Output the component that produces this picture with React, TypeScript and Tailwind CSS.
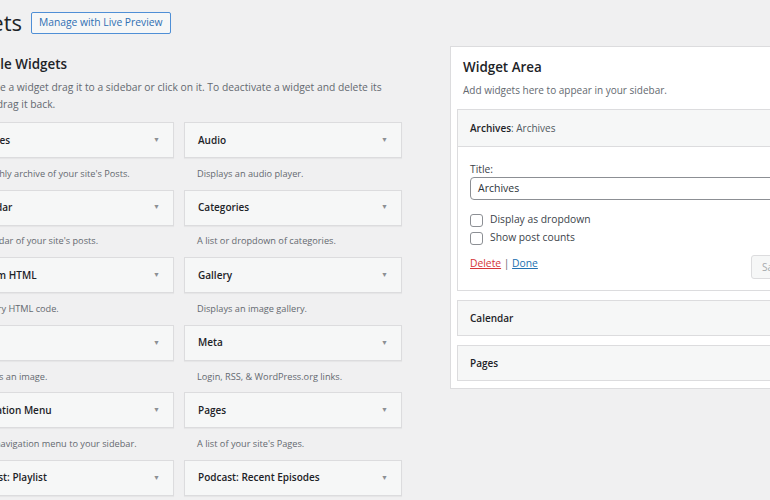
import React from "react";

type Widget = {
  name: string;
  description: string;
};

const leftWidgets: Widget[] = [
  { name: "Archives", description: "A monthly archive of your site's Posts." },
  { name: "Calendar", description: "A calendar of your site's posts." },
  { name: "Custom HTML", description: "Arbitrary HTML code." },
  { name: "Image", description: "Displays an image." },
  { name: "Navigation Menu", description: "Add a navigation menu to your sidebar." },
  { name: "Podcast: Playlist", description: "Displays a podcast playlist." }
];

const rightWidgets: Widget[] = [
  { name: "Audio", description: "Displays an audio player." },
  { name: "Categories", description: "A list or dropdown of categories." },
  { name: "Gallery", description: "Displays an image gallery." },
  { name: "Meta", description: "Login, RSS, & WordPress.org links." },
  { name: "Pages", description: "A list of your site's Pages." },
  { name: "Podcast: Recent Episodes", description: "Displays recent podcast episodes." }
];

function WidgetItem({ widget }: { widget: Widget }) {
  return (
    <div>
      <div className="flex h-[36px] items-center justify-between border border-[#dcdcde] bg-[#f6f7f7] pl-[13px] pr-[13px] shadow-[0_1px_1px_rgba(0,0,0,0.04)]">
        <span className="text-[10px] font-semibold text-[#1d2327]">{widget.name}</span>
        <span className="text-[7px] text-[#8c8f94]">▼</span>
      </div>
      <div className="flex h-[31.6px] items-center pl-[13px] text-[9.2px] text-[#646970]">
        {widget.description}
      </div>
    </div>
  );
}

function CollapsedWidget({ name }: { name: string }) {
  return (
    <div className="flex h-[36px] items-center border border-[#dcdcde] bg-[#f6f7f7] px-[12px]">
      <span className="text-[10px] font-semibold text-[#1d2327]">{name}</span>
    </div>
  );
}

function Checkbox({ label }: { label: string }) {
  return (
    <label className="flex h-[18px] items-center gap-[7px]">
      <span className="h-[13px] w-[13px] rounded-[3px] border border-[#8c8f94] bg-white" />
      <span className="text-[10.3px] text-[#3c434a]">{label}</span>
    </label>
  );
}

export default function App() {
  return (
    <div className="h-[500px] w-[770px] overflow-hidden bg-[#f0f0f1] font-['Open_Sans',sans-serif]">
      <div className="ml-[-60px] flex h-[46px] items-center gap-[9px] pb-[1px]">
        <h1 className="text-[22px] font-normal text-[#1d2327]">Widgets</h1>
        <button className="h-[22px] rounded-[2px] border border-[#4f8fd6] bg-[#f6f7f7] px-[7px] text-[10.3px] font-medium text-[#2f6fb3]">
          Manage with Live Preview
        </button>
      </div>

      <div className="flex">
        <div className="ml-[-45px] w-[447px] shrink-0">
          <h2 className="mt-[8px] ml-[-2px] text-[13.4px] leading-[20px] font-semibold text-[#1d2327]">
            Available Widgets
          </h2>
          <p className="mt-[5px] ml-[-1px] w-[430px] text-[10.3px] leading-[17px] text-[#646970]">
            To activate a widget drag it to a sidebar or click on it. To deactivate a widget and
            delete its settings, drag it back.
          </p>
          <div className="mt-[9px] grid grid-cols-[219px_218px] gap-x-[10px]">
            {leftWidgets.map((widget, index) => (
              <React.Fragment key={widget.name}>
                <WidgetItem widget={widget} />
                <WidgetItem widget={rightWidgets[index]} />
              </React.Fragment>
            ))}
          </div>
        </div>

        <div className="ml-[48px] w-[371px] shrink-0 self-start border border-[#dcdcde] bg-white px-[6px] pb-[7px]">
          <div className="px-[6px] pt-[10px] pb-[12px]">
            <h2 className="text-[13.4px] leading-[20px] font-semibold text-[#1d2327]">Widget Area</h2>
            <p className="mt-[6px] text-[10px] leading-[14px] text-[#646970]">
              Add widgets here to appear in your sidebar.
            </p>
          </div>

          <div className="border border-[#dcdcde]">
            <div className="flex h-[37px] items-center border-b border-[#dcdcde] bg-[#f6f7f7] px-[12px] text-[10px]">
              <span className="font-semibold text-[#1d2327]">Archives</span>
              <span className="text-[#50575e]">: Archives</span>
            </div>
            <div className="px-[12px] pt-[15px] pb-[11px]">
              <div className="text-[10.3px] leading-[14px] text-[#3c434a]">Title:</div>
              <div className="mt-[1px] flex h-[23px] items-center rounded-[4px] border border-[#8c8f94] px-[7px] text-[10.5px] text-[#2c3338]">
                Archives
              </div>
              <div className="mt-[11px] flex flex-col">
                <Checkbox label="Display as dropdown" />
                <Checkbox label="Show post counts" />
              </div>
              <div className="mt-[8px] flex items-start justify-between">
                <div className="text-[10.3px] leading-[16px] text-[#646970]">
                  <a className="text-[#d63638] underline">Delete</a>
                  <span> | </span>
                  <a className="text-[#2271b1] underline">Done</a>
                </div>
                <button className="flex h-[24px] w-[50px] items-center justify-center rounded-[3px] border border-[#dcdcde] bg-[#f6f7f7] text-[10px] text-[#a7aaad]">
                  Saved
                </button>
              </div>
            </div>
          </div>

          <div className="mt-[9px] flex flex-col gap-[9px]">
            <CollapsedWidget name="Calendar" />
            <CollapsedWidget name="Pages" />
          </div>
        </div>
      </div>
    </div>
  );
}
